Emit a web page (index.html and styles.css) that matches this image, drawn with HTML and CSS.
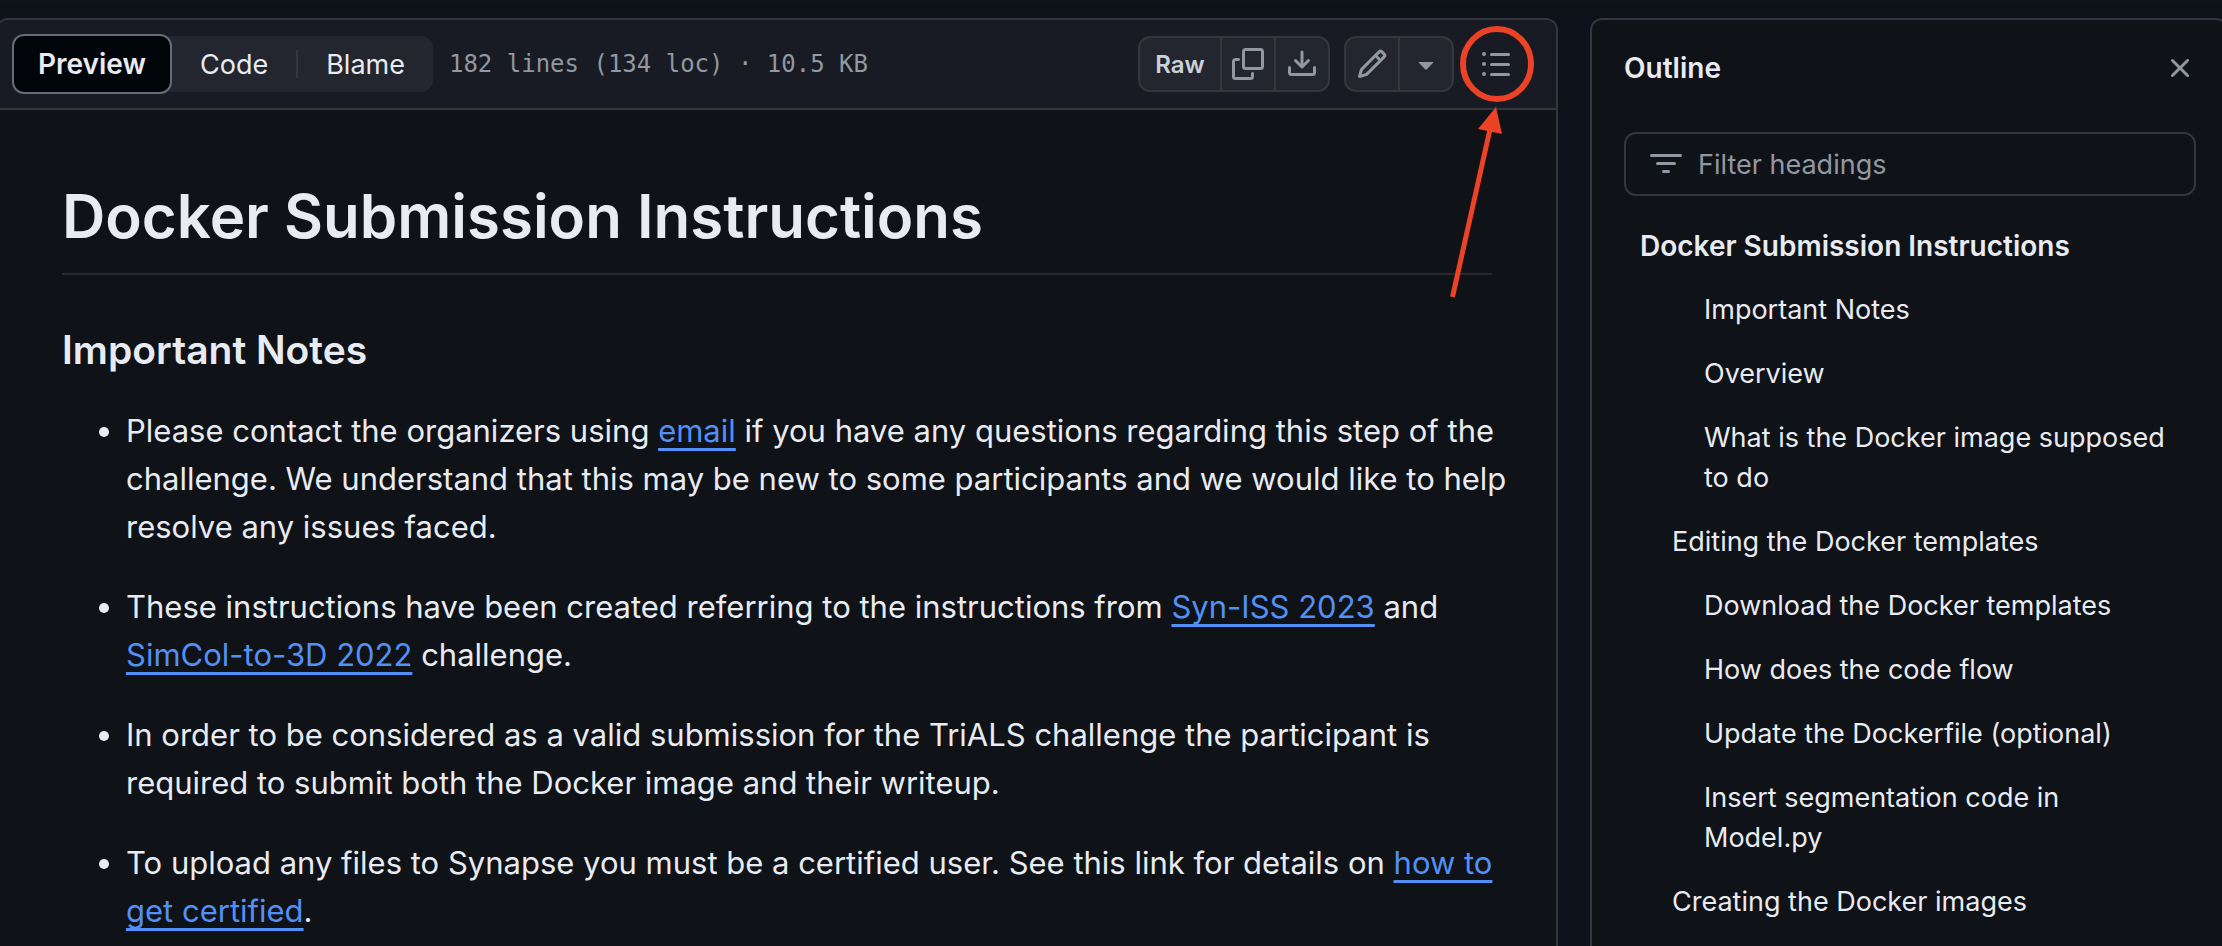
FILE: index.html
```html
<!DOCTYPE html>
<html lang="en">
<head>
<meta charset="utf-8">
<meta name="viewport" content="width=device-width, initial-scale=1">
<title>Docker Submission Instructions</title>
<link rel="stylesheet" href="styles.css">
</head>
<body>
<div class="layout">
  <main class="file">
    <header class="toolbar">
      <div class="views" role="group" aria-label="File view">
        <button type="button" class="view view-current" aria-pressed="true">Preview</button>
        <button type="button" class="view">Code</button>
        <span class="view-divider"></span>
        <button type="button" class="view">Blame</button>
      </div>
      <div class="file-info">182 lines (134 loc) · 10.5 KB</div>
      <div class="actions">
        <div class="group">
          <button type="button" class="group-btn raw">Raw</button>
          <button type="button" class="group-btn" aria-label="Copy raw file">
            <svg class="icon" viewBox="0 0 16 16"><path d="M0 6.75C0 5.784.784 5 1.75 5h1.5a.75.75 0 0 1 0 1.5h-1.5a.25.25 0 0 0-.25.25v7.5c0 .138.112.25.25.25h7.5a.25.25 0 0 0 .25-.25v-1.5a.75.75 0 0 1 1.5 0v1.5A1.75 1.75 0 0 1 9.25 16h-7.5A1.75 1.75 0 0 1 0 14.25Z"/><path d="M5 1.75C5 .784 5.784 0 6.75 0h7.5C15.216 0 16 .784 16 1.75v7.5A1.75 1.75 0 0 1 14.25 11h-7.5A1.75 1.75 0 0 1 5 9.25Zm1.75-.25a.25.25 0 0 0-.25.25v7.5c0 .138.112.25.25.25h7.5a.25.25 0 0 0 .25-.25v-7.5a.25.25 0 0 0-.25-.25Z"/></svg>
          </button>
          <button type="button" class="group-btn" aria-label="Download raw file">
            <svg class="icon" viewBox="0 0 16 16"><path d="M2.75 14A1.75 1.75 0 0 1 1 12.25v-2.5a.75.75 0 0 1 1.5 0v2.5c0 .138.112.25.25.25h10.5a.25.25 0 0 0 .25-.25v-2.5a.75.75 0 0 1 1.5 0v2.5A1.75 1.75 0 0 1 13.25 14Z"/><path d="M7.25 7.689V2a.75.75 0 0 1 1.5 0v5.689l1.97-1.969a.749.749 0 1 1 1.06 1.06l-3.25 3.25a.749.749 0 0 1-1.06 0L4.22 6.78a.749.749 0 1 1 1.06-1.06l1.97 1.969Z"/></svg>
          </button>
        </div>
        <div class="group">
          <button type="button" class="group-btn" aria-label="Edit this file">
            <svg class="icon" viewBox="0 0 16 16"><path d="M11.013 1.427a1.75 1.75 0 0 1 2.474 0l1.086 1.086a1.75 1.75 0 0 1 0 2.474l-8.61 8.61c-.21.21-.47.364-.756.445l-3.251.93a.75.75 0 0 1-.927-.928l.929-3.25c.081-.286.235-.547.445-.758l8.61-8.61Zm.176 4.823L9.75 4.81l-6.286 6.287a.253.253 0 0 0-.064.108l-.558 1.953 1.953-.558a.253.253 0 0 0 .108-.064Zm1.238-3.763a.25.25 0 0 0-.354 0L10.811 3.75l1.439 1.44 1.263-1.263a.25.25 0 0 0 0-.354Z"/></svg>
          </button>
          <button type="button" class="group-btn" aria-label="More edit options">
            <svg class="icon" viewBox="0 0 16 16"><path d="m4.427 7.427 3.396 3.396a.25.25 0 0 0 .354 0l3.396-3.396A.25.25 0 0 0 11.396 7H4.604a.25.25 0 0 0-.177.427Z"/></svg>
          </button>
        </div>
        <button type="button" class="outline-toggle" aria-label="Outline">
          <svg class="icon" viewBox="0 0 16 16"><path d="M5.75 2.5h8.5a.75.75 0 0 1 0 1.5h-8.5a.75.75 0 0 1 0-1.5Zm0 5h8.5a.75.75 0 0 1 0 1.5h-8.5a.75.75 0 0 1 0-1.5Zm0 5h8.5a.75.75 0 0 1 0 1.5h-8.5a.75.75 0 0 1 0-1.5ZM2 14a1 1 0 1 1 0-2 1 1 0 0 1 0 2Zm1-6a1 1 0 1 1-2 0 1 1 0 0 1 2 0ZM2 4a1 1 0 1 1 0-2 1 1 0 0 1 0 2Z"/></svg>
          <svg class="callout" viewBox="0 0 84 280" aria-hidden="true">
            <ellipse cx="43" cy="40" rx="34" ry="35" fill="none" stroke="#ec4226" stroke-width="6"/>
            <path d="M-1.500 273 36.500 103" fill="none" stroke="#ec4226" stroke-width="5"/>
            <path d="M42 83 24 105 48 110Z" fill="#ec4226"/>
          </svg>
        </button>
      </div>
    </header>
    <article class="markdown">
      <h1>Docker Submission Instructions</h1>
      <h3>Important Notes</h3>
      <ul>
        <li>Please contact the organizers using <a href="#email">email</a> if you have any questions regarding this step of the challenge. We understand that this may be new to some participants and we would like to help resolve any issues faced.</li>
        <li>These instructions have been created referring to the instructions from <a href="#syn-iss">Syn-ISS 2023</a> and <a href="#simcol">SimCol-to-3D 2022</a> challenge.</li>
        <li>In order to be considered as a valid submission for the TriALS challenge the participant is required to submit both the Docker image and their writeup.</li>
        <li>To upload any files to Synapse you must be a certified user. See this link for details on <a href="#certified">how to get certified</a>.</li>
      </ul>
    </article>
  </main>
  <aside class="outline">
    <div class="outline-head">
      <h2>Outline</h2>
      <button type="button" class="close" aria-label="Close outline">
        <svg class="icon" viewBox="0 0 16 16"><path d="M3.72 3.72a.75.75 0 0 1 1.06 0L8 6.94l3.22-3.22a.749.749 0 0 1 1.275.326.749.749 0 0 1-.215.734L9.06 8l3.22 3.22a.749.749 0 0 1-.326 1.275.749.749 0 0 1-.734-.215L8 9.06l-3.22 3.22a.751.751 0 0 1-1.042-.018.751.751 0 0 1-.018-1.042L6.94 8 3.72 4.78a.75.75 0 0 1 0-1.06Z"/></svg>
      </button>
    </div>
    <label class="filter">
      <svg class="icon" viewBox="0 0 16 16"><path d="M.75 3h14.5a.75.75 0 0 1 0 1.500H.75a.75.75 0 0 1 0-1.500ZM3 7.750A.75.75 0 0 1 3.750 7h8.500a.75.75 0 0 1 0 1.500h-8.500A.75.75 0 0 1 3 7.750Zm3 4a.75.75 0 0 1 .75-.75h2.500a.75.75 0 0 1 0 1.500h-2.500a.75.75 0 0 1-.75-.75Z"/></svg>
      <input type="text" placeholder="Filter headings" aria-label="Filter headings">
    </label>
    <nav class="toc" aria-label="Outline">
      <a class="level-1" href="#docker">Docker Submission Instructions</a>
      <a class="level-3" href="#notes">Important Notes</a>
      <a class="level-3" href="#overview">Overview</a>
      <a class="level-3" href="#what">What is the Docker image supposed to do</a>
      <a class="level-2" href="#editing">Editing the Docker templates</a>
      <a class="level-3" href="#download">Download the Docker templates</a>
      <a class="level-3" href="#flow">How does the code flow</a>
      <a class="level-3" href="#update">Update the Dockerfile (optional)</a>
      <a class="level-3" href="#insert">Insert segmentation code in Model.py</a>
      <a class="level-2" href="#creating">Creating the Docker images</a>
    </nav>
  </aside>
</div>
</body>
</html>
```

FILE: styles.css
```css
* {
  box-sizing: border-box;
}

html,
body {
  height: 100%;
}

body {
  margin: 0;
  overflow: hidden;
  background: linear-gradient(#0f1217, #0d1119 12px);
  color: #e8ebf1;
  font-family: Inter, "Liberation Sans", sans-serif;
  font-size: 27px;
}

button {
  margin: 0;
  padding: 0;
  border: 0;
  background: none;
  color: inherit;
  font: inherit;
  cursor: pointer;
}

.layout {
  display: flex;
  gap: 32px;
  min-height: 100%;
  margin: 0 -6px 0 -4px;
  padding-top: 18px;
}

.icon {
  display: block;
  flex: none;
  width: 32px;
  height: 32px;
  fill: #9198a1;
}

.file {
  flex: 1;
  min-width: 0;
  border: 2px solid #33363c;
  border-bottom: 0;
  border-radius: 12px 12px 0 0;
  background: #0f1217;
}

.toolbar {
  display: flex;
  align-items: center;
  height: 90px;
  padding: 0 44px 0 14px;
  border-bottom: 2px solid #33363c;
  border-radius: 10px 10px 0 0;
  background: #181b23;
}

.views {
  display: flex;
  align-items: center;
  height: 56px;
  border-radius: 12px;
  background: #23262e;
}

.view {
  height: 56px;
  padding: 0 28px;
}

.view-current {
  height: 60px;
  padding: 0 24px;
  border: 2px solid #656c76;
  border-radius: 12px;
  background: #010409;
  font-size: 28px;
  font-weight: 600;
}

.view-divider {
  width: 2px;
  height: 28px;
  background: #33363c;
}

.file-info {
  margin-left: 16px;
  color: #9198a1;
  font-family: "DejaVu Sans Mono", monospace;
  font-size: 24px;
}

.actions {
  display: flex;
  align-items: center;
  gap: 14px;
  margin-left: auto;
}

.group {
  display: flex;
  height: 56px;
  border: 2px solid #33363c;
  border-radius: 12px;
  background: #23262e;
}

.group-btn {
  display: flex;
  align-items: center;
  justify-content: center;
  width: 54px;
}

.group-btn:first-child {
  width: 52px;
}

.group-btn + .group-btn {
  border-left: 2px solid #33363c;
}

.group-btn.raw {
  width: 80px;
  color: #c9d1d9;
  font-size: 24px;
  font-weight: 600;
}

.outline-toggle {
  position: relative;
  margin-left: 12px;
}

.callout {
  position: absolute;
  top: -24px;
  left: -26px;
  width: 84px;
  height: 280px;
  overflow: visible;
  pointer-events: none;
}

.markdown {
  padding: 66px 64px 0;
  font-size: 31px;
  line-height: 48px;
}

.markdown h1 {
  margin: 0 0 50px;
  padding-bottom: 17px;
  border-bottom: 2px solid #25282e;
  font-size: 60px;
  font-weight: 600;
  line-height: 80px;
}

.markdown h3 {
  margin: 0 0 32px;
  font-size: 39px;
  font-weight: 600;
  line-height: 50px;
}

.markdown ul {
  margin: 0 -20px 0 0;
  padding-left: 64px;
}

.markdown li + li {
  margin-top: 32px;
}

.markdown a {
  color: #5390f5;
  text-decoration: underline;
  text-decoration-skip-ink: none;
  text-decoration-thickness: 3px;
  text-underline-offset: 6px;
}

.outline {
  flex: none;
  width: 638px;
  padding: 24px 30px 0 32px;
  border: 2px solid #33363c;
  border-bottom: 0;
  border-radius: 12px 12px 0 0;
  background: #0f1217;
}

.outline-head {
  display: flex;
  align-items: center;
  justify-content: space-between;
  height: 48px;
}

.outline h2 {
  margin: 0;
  font-size: 28px;
  font-weight: 600;
}

.filter {
  display: flex;
  align-items: center;
  gap: 16px;
  height: 64px;
  margin-top: 40px;
  padding: 0 24px;
  border: 2px solid #33363c;
  border-radius: 12px;
}

.filter input {
  flex: 1;
  min-width: 0;
  padding: 0;
  border: 0;
  outline: 0;
  background: none;
  color: inherit;
  font: inherit;
}

.filter input::placeholder {
  color: #9198a1;
  opacity: 1;
}

.toc {
  display: flex;
  flex-direction: column;
  padding-top: 18px;
  line-height: 40px;
}

.toc a {
  padding: 12px 16px;
  color: inherit;
  text-decoration: none;
}

.toc .level-1 {
  font-size: 28px;
  font-weight: 600;
}

.toc .level-2 {
  padding-left: 48px;
}

.toc .level-3 {
  padding-left: 80px;
}

.close {
  display: flex;
}
```
